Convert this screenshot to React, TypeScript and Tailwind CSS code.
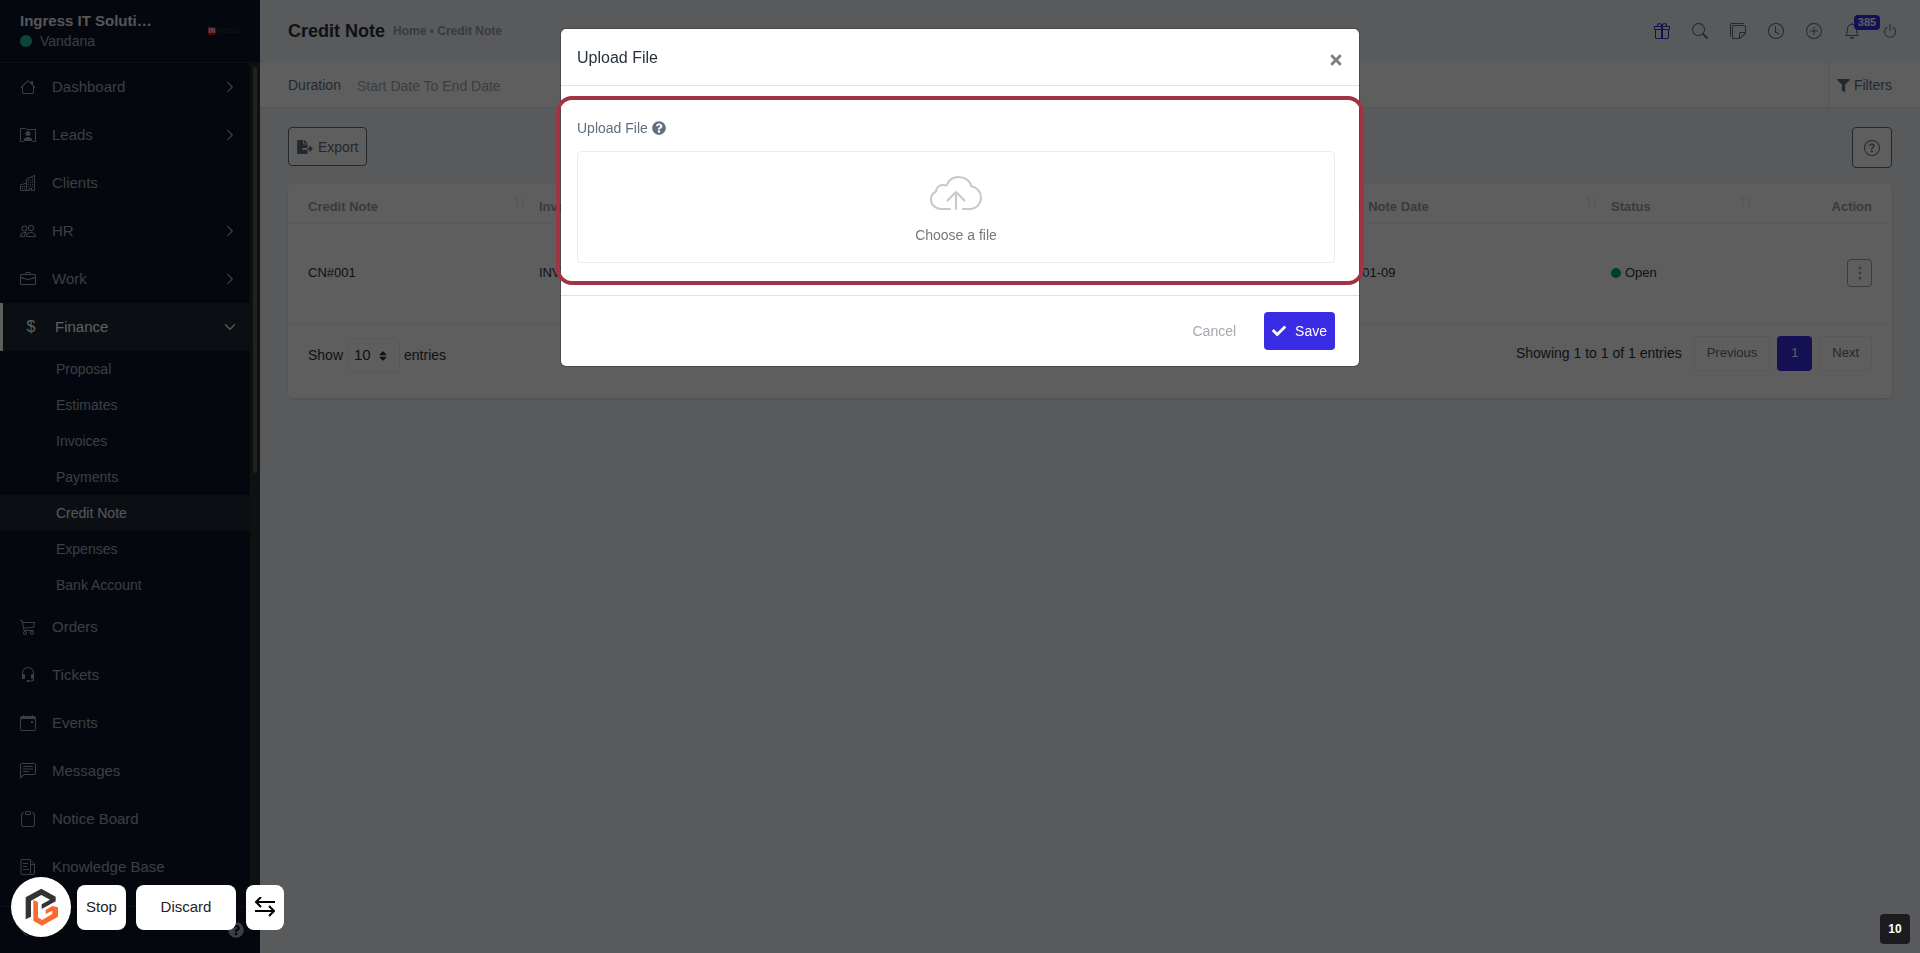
import type { ComponentType } from "react";
import {
  BsBell,
  BsBriefcase,
  BsBuildings,
  BsCalendarEvent,
  BsCart3,
  BsChatLeftText,
  BsChevronDown,
  BsChevronRight,
  BsClipboard,
  BsClock,
  BsGift,
  BsHeadset,
  BsHouse,
  BsPeople,
  BsPlusCircle,
  BsPower,
  BsQuestionCircle,
  BsSearch,
  BsStickies,
  BsThreeDotsVertical,
} from "react-icons/bs";
import {
  FaCheck,
  FaFileExport,
  FaFilter,
  FaQuestionCircle,
  FaSort,
  FaTimes,
} from "react-icons/fa";

type Icon = ComponentType<{ className?: string }>;
type MenuItem = { label: string; icon: Icon; arrow?: boolean };

function LeadsIcon({ className }: { className?: string }) {
  return (
    <svg viewBox="0 0 16 16" className={className} fill="none" stroke="currentColor">
      <path d="M3.500 14.500h-3v-13h5l1 1h9v12h-3" />
      <path
        d="M8 9a2.500 2.500 0 1 0 0-5 2.500 2.500 0 0 0 0 5ZM3.500 14c.3-2.500 2-4 4.500-4s4.200 1.500 4.500 4Z"
        fill="currentColor"
        stroke="none"
      />
    </svg>
  );
}

function ArticleIcon({ className }: { className?: string }) {
  return (
    <svg viewBox="0 0 16 16" className={className} fill="none" stroke="currentColor">
      <path d="M1.500.500h8.500l4.500 4.500v9a1.500 1.500 0 0 1-1.500 1.500H2a1 1 0 0 1-1-1V1a.5.5 0 0 1 .5-.5Z" />
      <path d="M10.500 1v4.500h4M10.500 5v9.500M3 4.500h5M3 7.500h4M3 10.500h6" />
    </svg>
  );
}

const topMenu: MenuItem[] = [
  { label: "Dashboard", icon: BsHouse, arrow: true },
  { label: "Leads", icon: LeadsIcon, arrow: true },
  { label: "Clients", icon: BsBuildings },
  { label: "HR", icon: BsPeople, arrow: true },
  { label: "Work", icon: BsBriefcase, arrow: true },
];

const financeMenu = [
  "Proposal",
  "Estimates",
  "Invoices",
  "Payments",
  "Credit Note",
  "Expenses",
  "Bank Account",
];

const bottomMenu: MenuItem[] = [
  { label: "Orders", icon: BsCart3 },
  { label: "Tickets", icon: BsHeadset },
  { label: "Events", icon: BsCalendarEvent },
  { label: "Messages", icon: BsChatLeftText },
  { label: "Notice Board", icon: BsClipboard },
  { label: "Knowledge Base", icon: ArticleIcon },
];

const headerIcons: { label: string; icon: Icon }[] = [
  { label: "Search", icon: BsSearch },
  { label: "Sticky notes", icon: BsStickies },
  { label: "Timer", icon: BsClock },
  { label: "Add", icon: BsPlusCircle },
];

function SidebarLink({ item }: { item: MenuItem }) {
  const Icon = item.icon;
  return (
    <a href="#" className="flex h-12 items-center pr-[14px] pl-5 text-[15px]">
      <Icon className="h-4 w-4 shrink-0" />
      <span className="ml-4 flex-1">{item.label}</span>
      {item.arrow && <BsChevronRight className="h-3 w-3 stroke-1" />}
    </a>
  );
}

function Sidebar() {
  return (
    <aside className="flex h-screen w-[260px] shrink-0 flex-col bg-[#0c1527] text-[#a2a8b2]">
      <div className="flex h-[63px] shrink-0 items-center justify-between border-b border-[#202b3d] px-5">
        <div>
          <h2 className="text-[15px] leading-5 font-bold text-[#e6e8ec]">
            Ingress IT Soluti…
          </h2>
          <p className="flex items-center gap-2 text-sm leading-5">
            <span className="h-3 w-3 rounded-full bg-[#1fbd93]" />
            Vandana
          </p>
        </div>
        <span className="flex items-center text-[7px] leading-2 font-bold">
          <span className="bg-[#e01414] text-white">IN</span>
          <span className="text-[#2a2d38]">GRESS</span>
        </span>
      </div>
      <div className="flex min-h-0 flex-1">
        <nav className="min-w-0 flex-1 overflow-hidden">
          {topMenu.map((item) => (
            <SidebarLink key={item.label} item={item} />
          ))}
          <a
            href="#"
            className="flex h-12 items-center border-l-3 border-white bg-[#1f2835] pr-[14px] pl-5 text-[15px] text-white"
          >
            <span className="w-4 text-center text-base">$</span>
            <span className="ml-4 flex-1">Finance</span>
            <BsChevronDown className="h-3 w-3 stroke-1" />
          </a>
          {financeMenu.map((label) => (
            <a
              key={label}
              href="#"
              className={
                label === "Credit Note"
                  ? "flex h-9 items-center bg-[#1f2835] pl-14 text-sm text-[#e6e8ec]"
                  : "flex h-9 items-center pl-14 text-sm"
              }
            >
              {label}
            </a>
          ))}
          {bottomMenu.map((item) => (
            <SidebarLink key={item.label} item={item} />
          ))}
        </nav>
        <div className="w-[10px] bg-[#2a2d33] pt-1">
          <div className="mx-auto h-[406px] w-1 rounded-sm bg-[#5c5c5c]" />
        </div>
      </div>
      <div className="flex h-[47px] shrink-0 items-center justify-between border-t border-[#202b3d] px-4">
        <BsChevronRight className="h-4 w-4 rotate-180" />
        <FaQuestionCircle className="h-4 w-4" />
      </div>
    </aside>
  );
}

function SortIcon() {
  return (
    <svg
      viewBox="0 0 12 12"
      className="absolute top-3 right-[3px] h-3 w-3 text-[#e0e2e6]"
      fill="none"
      stroke="currentColor"
    >
      <path d="M3 11V1M1 3l2-2 2 2M9 1v10M7 9l2 2 2-2" />
    </svg>
  );
}

function HeaderCell({ label }: { label: string }) {
  return (
    <th className="relative px-[10px] pt-[6px] text-left">
      {label}
      <SortIcon />
    </th>
  );
}

function CreditNoteTable() {
  return (
    <section className="rounded bg-white shadow-sm">
      <table className="w-full table-fixed text-[13px]">
        <colgroup>
          <col className="w-[241px]" />
          <col className="w-[200px]" />
          <col />
          <col className="w-[200px]" />
          <col className="w-[284px]" />
          <col className="w-[154px]" />
          <col className="w-[137px]" />
        </colgroup>
        <thead>
          <tr className="h-[39px] border-b border-[#f0f1f4] text-[#99a0aa]">
            <th className="relative pt-[6px] pl-5 text-left">
              Credit Note
              <SortIcon />
            </th>
            <HeaderCell label="Invoice" />
            <HeaderCell label="Name" />
            <HeaderCell label="Total" />
            <HeaderCell label="Credit Note Date" />
            <HeaderCell label="Status" />
            <th className="pt-[6px] pr-5 text-right">Action</th>
          </tr>
        </thead>
        <tbody>
          <tr className="h-[101px] border-b border-[#f0f1f4] text-[#28313c]">
            <td className="pb-px pl-5">CN#001</td>
            <td className="px-[10px] pb-px">INV#001</td>
            <td></td>
            <td></td>
            <td className="px-3 pb-px">2023-01-09</td>
            <td className="px-[10px] pb-px">
              <span className="flex items-center gap-1">
                <span className="h-[10px] w-[10px] rounded-full bg-[#00b05c]" />
                Open
              </span>
            </td>
            <td className="pr-5 pb-px">
              <button
                aria-label="Row actions"
                className="ml-auto flex h-7 w-[25px] items-center justify-center rounded border border-[#99a5b5] text-[#99a5b5]"
              >
                <BsThreeDotsVertical className="h-4 w-4" />
              </button>
            </td>
          </tr>
        </tbody>
      </table>
      <div className="flex h-[73px] items-start justify-between px-5 pt-[11px] text-sm text-[#28313c]">
        <label className="flex items-center gap-1 pt-0.5">
          Show
          <span className="relative">
            <select className="h-[35px] w-[53px] appearance-none rounded border border-[#e8eef3] pl-[6px] text-[15px]">
              <option>10</option>
            </select>
            <FaSort className="pointer-events-none absolute top-3 right-[11px] h-3 w-3" />
          </span>
          entries
        </label>
        <div className="flex items-center gap-[7px]">
          <span className="mr-[5px]">Showing 1 to 1 of 1 entries</span>
          <button className="h-[35px] rounded border border-[#e8eef3] px-3 text-[13px] text-[#616e80]">
            Previous
          </button>
          <button className="h-[35px] w-[35px] rounded bg-[#3a2be4] text-[13px] text-white">
            1
          </button>
          <button className="h-[35px] rounded border border-[#e8eef3] px-3 text-[13px] text-[#616e80]">
            Next
          </button>
        </div>
      </div>
    </section>
  );
}

function Header() {
  return (
    <header className="flex h-[63px] items-center justify-between pr-[22px] pb-px pl-7">
      <div className="flex items-center gap-2">
        <h1 className="text-lg font-bold text-[#28313c]">Credit Note</h1>
        <p className="text-xs font-bold text-[#99a0aa]">
          <a href="#">Home</a> • Credit Note
        </p>
      </div>
      <div className="flex items-center gap-[22px] text-[#616e80]">
        <button aria-label="What's new" className="text-[#3a2be4]">
          <BsGift className="h-4 w-4" />
        </button>
        {headerIcons.map(({ label, icon: Icon }) => (
          <button key={label} aria-label={label}>
            <Icon className="h-4 w-4" />
          </button>
        ))}
        <button aria-label="Notifications" className="relative">
          <BsBell className="h-4 w-4" />
          <span className="absolute -top-2 left-[10px] flex h-[15px] w-[26px] items-center justify-center rounded bg-[#3a2be4] text-[11px] font-bold text-white">
            385
          </span>
        </button>
        <button aria-label="Log out">
          <BsPower className="h-4 w-4" />
        </button>
      </div>
    </header>
  );
}

function CloudIcon() {
  return (
    <svg
      viewBox="0 0 52 34"
      className="h-[34px] w-[52px]"
      fill="none"
      stroke="#c8c8c8"
      strokeWidth="2"
      strokeLinecap="round"
      strokeLinejoin="round"
    >
      <path d="M20 33h-8.500C5.500 33 1 29 1 23.500 1 19.500 3 17 6 15.500 6 11 10 8 16.500 9.500 18.500 4.500 23 1 28.500 1 35 1 40.500 5 41.500 10.500 47 11 51 16 51 21.500 51 28 46 33 40.500 33H33" />
      <path d="M26 33V16M17.500 24.500 26 16l8.500 8.500" />
    </svg>
  );
}

function UploadModal() {
  return (
    <div
      role="dialog"
      aria-labelledby="upload-title"
      className="relative mx-auto mt-7 w-[800px] rounded-md border border-black/20 bg-white bg-clip-padding"
    >
      <div className="flex h-[57px] items-center justify-between border-b border-[#dee2e6] pt-0.5 pr-[15px] pl-4">
        <h3 id="upload-title" className="text-base text-[#28313c]">
          Upload File
        </h3>
        <button aria-label="Close" className="pt-1 text-[#7f7f7f]">
          <FaTimes className="h-4 w-4" />
        </button>
      </div>
      <div className="h-[209px] pt-8 pr-6 pl-4">
        <p className="flex items-center gap-1 text-sm leading-5 text-[#616e80]">
          Upload File
          <FaQuestionCircle className="h-[14px] w-[14px]" />
        </p>
        <label className="mt-[13px] flex h-28 cursor-pointer flex-col items-center rounded border border-[#e8eef3] pt-6 text-sm text-[#777777]">
          <CloudIcon />
          <span className="mt-[15px]">Choose a file</span>
          <input type="file" className="sr-only" />
        </label>
      </div>
      <div className="flex h-[71px] items-center justify-end gap-7 border-t border-[#dee2e6] pr-6 text-sm">
        <button className="text-[#a3a9b1]">Cancel</button>
        <button className="flex h-[38px] items-center gap-[9px] rounded bg-[#3a2be4] px-2 text-white">
          <FaCheck className="h-[14px] w-[14px]" />
          Save
        </button>
      </div>
      <div className="pointer-events-none absolute -inset-x-[5px] top-[67px] h-[189px] rounded-2xl border-4 border-[#a03444]" />
    </div>
  );
}

function RecorderBar() {
  return (
    <div className="fixed bottom-4 left-[11px] flex items-center text-[15px] text-[#222222]">
      <div className="flex h-[60px] w-[60px] items-center justify-center rounded-full bg-white">
        <svg viewBox="0 0 99 114" className="h-[38px] w-[33px]">
          <path
            d="M2 28 49 2l43 24v14L50 63V49l25-14-26-14-31 17v48L2 94Z"
            fill="#333333"
          />
          <path
            d="M25 36l14 6v46l12 8 31-18V68L62 78V66l20-12 17 4v28l-48 27-26-15Z"
            fill="#f86a2e"
          />
        </svg>
      </div>
      <button className="ml-[6px] h-[45px] w-[49px] rounded-lg bg-white">
        Stop
      </button>
      <button className="ml-[10px] h-[45px] w-[100px] rounded-lg bg-white">
        Discard
      </button>
      <button
        aria-label="Move bar"
        className="ml-[10px] flex h-[45px] w-[38px] items-center justify-center rounded-lg bg-white"
      >
        <svg
          viewBox="0 0 20 20"
          className="h-5 w-5"
          fill="none"
          stroke="#000000"
          strokeWidth="2"
        >
          <path d="M20 5H1M6 0 1 5l5 5M0 14h19M14 9l5 5-5 5" />
        </svg>
      </button>
    </div>
  );
}

export default function App() {
  return (
    <div className="flex h-screen overflow-hidden bg-[#f2f4f9] font-['Liberation_Sans',Arial,sans-serif]">
      <Sidebar />
      <main className="min-w-0 flex-1">
        <Header />
        <div className="flex h-[45px] items-stretch justify-between border-b border-[#dfe4ec] bg-white px-7 text-sm">
          <label className="flex items-center gap-4 text-[#616e80]">
            Duration
            <input
              type="text"
              placeholder="Start Date To End Date"
              className="w-52 pt-px text-[#99a5b5] placeholder:text-[#a3a9b1]"
            />
          </label>
          <button className="flex items-center gap-1 border-l border-[#dfe4ec] pl-2 text-[#616e80]">
            <FaFilter className="h-[13px] w-[13px]" />
            Filters
          </button>
        </div>
        <div className="px-7 pt-[19px]">
          <div className="mb-4 flex items-start justify-between">
            <button className="flex h-[39px] items-center gap-[5px] rounded border border-[#616e80] bg-white px-2 text-sm text-[#616e80]">
              <FaFileExport className="h-[14px] w-4" />
              Export
            </button>
            <button
              aria-label="Help"
              className="flex h-[41px] w-10 items-center justify-center rounded border border-[#616e80] bg-white text-[#616e80]"
            >
              <BsQuestionCircle className="h-4 w-4" />
            </button>
          </div>
          <CreditNoteTable />
        </div>
      </main>
      <div className="fixed inset-0 bg-black/63">
        <UploadModal />
      </div>
      <RecorderBar />
      <div className="fixed right-[10px] bottom-[9px] flex h-[30px] w-[30px] items-center justify-center rounded bg-[#1c1c1e] text-xs font-bold text-white">
        10
      </div>
    </div>
  );
}
